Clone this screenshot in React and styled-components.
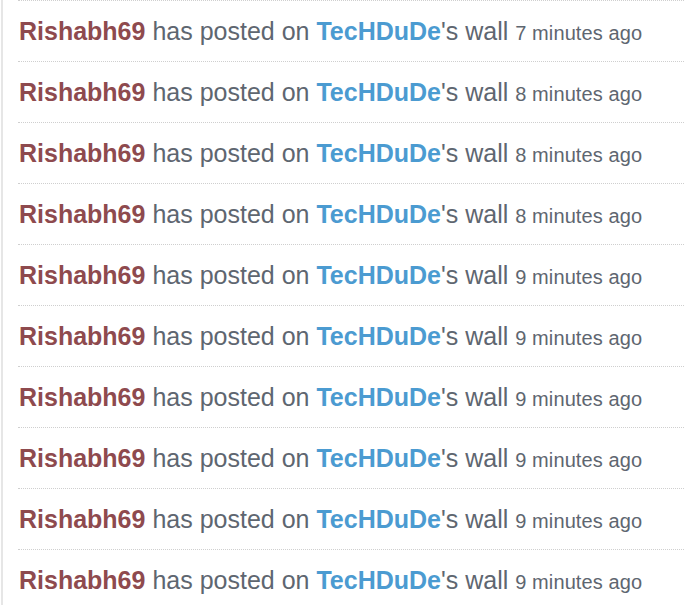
import React from "react";
import styled, { createGlobalStyle } from "styled-components";

const Global = createGlobalStyle`
  html, body { margin: 0; padding: 0; background: #fff; }
  body { font-family: "Liberation Sans", Arial, sans-serif; overflow: hidden; }
`;

const Feed = styled.ul`
  list-style: none;
  margin: 0 0 0 1px;
  padding: 0;
  border-left: 2px solid #e6e6e6;
  min-height: 605px;
`;

const Item = styled.li`
  margin-left: 15px;
  border-top: 1px dotted #cfcfcf;
  height: 60px;
  line-height: 60px;
  padding-left: 1px;
  white-space: nowrap;
  font-size: 25px;
  color: #5e6670;
`;

const User = styled.a`
  font-weight: bold;
  color: ${(p) => (p.$kind === "target" ? "#4b9bd1" : "#8e4a4e")};
  text-decoration: none;
`;

const Time = styled.span`
  font-size: 20px;
  letter-spacing: 0.1px;
  color: #5e6670;
`;

const data = [7, 8, 8, 8, 9, 9, 9, 9, 9, 9];

export default function App() {
  return (
    <>
      <Global />
      <Feed>
        {data.map((m, i) => (
          <Item key={i}>
            <User href="#">Rishabh69</User> has posted on{" "}
            <User href="#" $kind="target">TecHDuDe</User>'s wall{" "}
            <Time>{m} minutes ago</Time>
          </Item>
        ))}
      </Feed>
    </>
  );
}
